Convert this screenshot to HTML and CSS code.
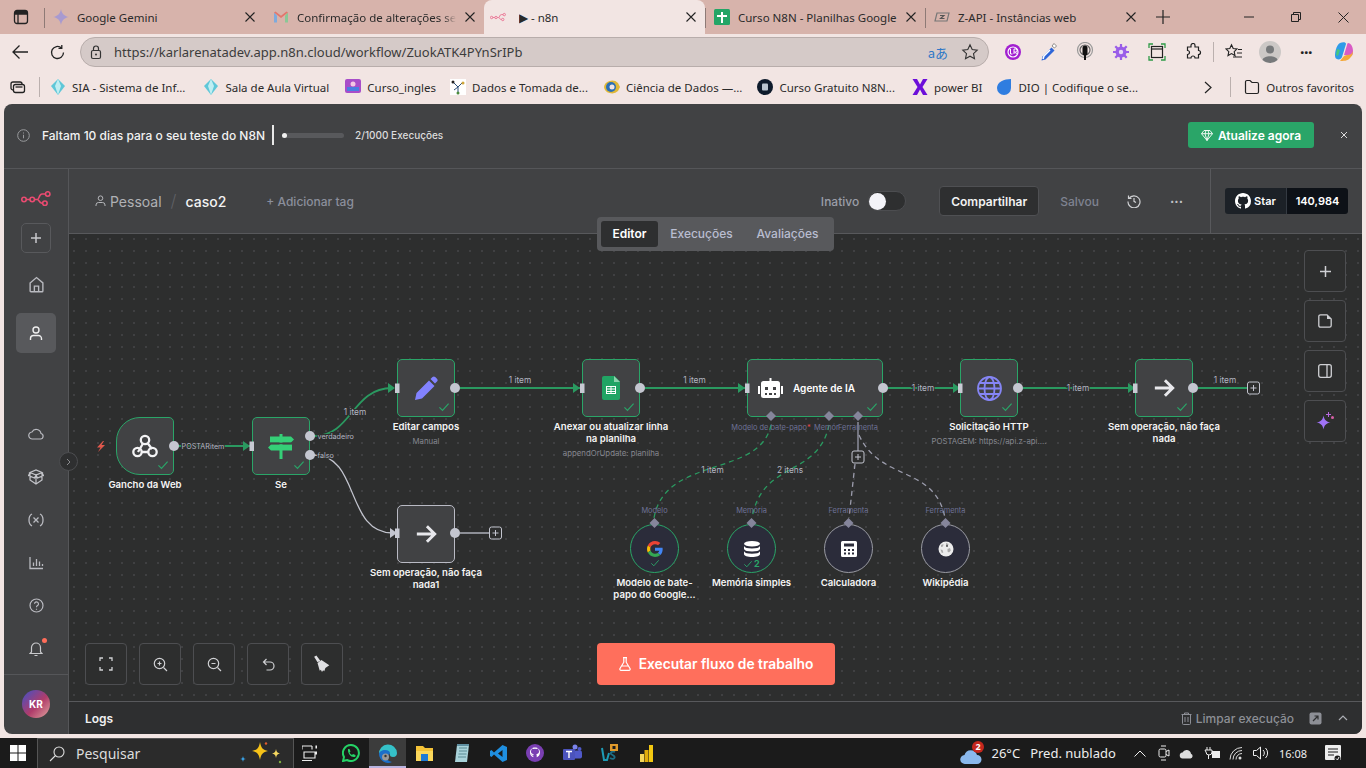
FILE: index.html
```html
<!DOCTYPE html>
<html lang="pt-BR">
<head>
<meta charset="utf-8">
<title>n8n</title>
<link rel="stylesheet" href="styles.css">
</head>
<body>
<svg class="sprite" aria-hidden="true">
  <symbol id="n8n" viewBox="0 0 32 16"><g fill="none" stroke="currentColor" stroke-width="1.7"><circle cx="3.2" cy="9" r="2.4"/><circle cx="12" cy="9" r="2.4"/><circle cx="28.5" cy="3.2" r="2.4"/><circle cx="25.5" cy="13" r="2.4"/><path d="M5.6 9h4M14.4 9h3c2.5 0 1.5-5.8 5-5.8h3.7M17.4 9c2.2 0 1.4 4 5 4h.7"/></g></symbol>
  <symbol id="check" viewBox="0 0 14 12"><path d="M1.5 6.5l3.7 3.7 7.3-8.2" fill="none" stroke="currentColor" stroke-width="1.4"/></symbol>
  <symbol id="x" viewBox="0 0 12 12"><path d="M1.5 1.5l9 9M10.500 1.5l-9 9" fill="none" stroke="currentColor" stroke-width="1.1"/></symbol>
  <symbol id="arrow" viewBox="0 0 24 24"><path d="M2 12h19M13 3.5l8.5 8.5-8.5 8.5" fill="none" stroke="currentColor" stroke-width="3.2"/></symbol>
  <symbol id="gemini" viewBox="0 0 16 16"><path d="M8 0c.6 4.5 3.4 7.3 8 8-4.6.7-7.4 3.5-8 8-.6-4.5-3.4-7.3-8-8 4.6-.7 7.4-3.5 8-8z"/></symbol>
</svg>

<header class="tabbar">
  <div class="tab-strip-btn">
    <svg width="16" height="16" viewBox="0 0 16 16"><rect x="1.5" y="1.5" width="13" height="13" rx="2.5" fill="none" stroke="#222" stroke-width="1.3"/><path d="M1.5 5h13M5 5v9" stroke="#222" stroke-width="1.3"/><rect x="2" y="2" width="12" height="3" fill="#222"/></svg>
  </div>
  <div class="tab tab-sep">
    <svg class="tab-ico gem-ico" width="16" height="16"><use href="#gemini"/></svg>
    <span class="tab-title">Google Gemini</span>
    <svg class="tab-x" width="12" height="12"><use href="#x"/></svg>
  </div>
  <div class="tab">
    <svg class="tab-ico" width="16" height="16" viewBox="0 0 16 16"><path d="M1 3.5v10h3v-7z" fill="#7eaadc"/><path d="M15 3.5v10h-3v-7z" fill="#8ac796"/><path d="M1 3.5l7 5.500 7-5.500-1.500-1-5.500 4.200-5.500-4.200z" fill="#e2766c"/></svg>
    <span class="tab-title tab-fade">Confirmação de alterações ser</span>
    <svg class="tab-x" width="12" height="12"><use href="#x"/></svg>
  </div>
  <div class="tab tab-active">
    <svg class="tab-ico pink" width="16" height="16"><use href="#n8n"/></svg>
    <span class="tab-title">▶ - n8n</span>
    <svg class="tab-x" width="12" height="12"><use href="#x"/></svg>
  </div>
  <div class="tab tab-sep">
    <svg class="tab-ico" width="16" height="16" viewBox="0 0 16 16"><rect width="16" height="16" rx="1.5" fill="#23a566"/><path d="M7 3h2v3h4v2H9v6H7V8H3V6h4z" fill="#fff"/></svg>
    <span class="tab-title">Curso N8N - Planilhas Google</span>
    <svg class="tab-x" width="12" height="12"><use href="#x"/></svg>
  </div>
  <div class="tab tab-sep">
    <svg class="tab-ico" width="16" height="16" viewBox="0 0 16 16"><path d="M3 4h12l-2 8H1z" fill="none" stroke="#777" stroke-width="1.2"/><path d="M6 6.500h4l-3.500 3h4" fill="none" stroke="#555" stroke-width="1.1"/></svg>
    <span class="tab-title">Z-API - Instâncias web</span>
    <svg class="tab-x" width="12" height="12"><use href="#x"/></svg>
  </div>
  <svg class="tab-plus" width="14" height="14" viewBox="0 0 14 14"><path d="M7 0v14M0 7h14" stroke="#222" stroke-width="1.2"/></svg>
  <div class="win-ctrls">
    <svg width="10" height="10" viewBox="0 0 10 10"><path d="M0 5h10" stroke="#222"/></svg>
    <svg width="10" height="10" viewBox="0 0 10 10"><path d="M.5 2.500h7v7h-7zM2.500 2.500v-2h7v7h-2" fill="none" stroke="#222"/></svg>
    <svg width="11" height="11" viewBox="0 0 11 11"><path d="M.5.500l10 10M10.500.500l-10 10" stroke="#222"/></svg>
  </div>
</header>

<nav class="toolbar">
  <svg class="tb-back" width="18" height="16" viewBox="0 0 18 16"><path d="M17 8H2M8.500 1.500L2 8l6.500 6.500" fill="none" stroke="#222" stroke-width="1.3"/></svg>
  <svg class="tb-reload" width="17" height="17" viewBox="0 0 17 17"><path d="M14.500 8.500a6 6 0 1 1-2-4.500M12.800 1v3.300H9.500" fill="none" stroke="#222" stroke-width="1.3"/></svg>
  <div class="urlbar">
    <svg width="12" height="15" viewBox="0 0 12 15"><rect x="1.5" y="5.5" width="9" height="8" rx="1.5" fill="none" stroke="#333" stroke-width="1.2"/><path d="M3.500 5.500V3.500a2.500 2.500 0 0 1 5 0v2" fill="none" stroke="#333" stroke-width="1.2"/><circle cx="6" cy="9.5" r="1" fill="#333"/></svg>
    <span class="url">https://karlarenatadev.app.n8n.cloud/workflow/ZuokATK4PYnSrIPb</span>
    <span class="url-spacer"></span>
    <span class="url-trans">aあ</span>
    <svg width="18" height="18" viewBox="0 0 18 18"><path d="M9 1.800l2.200 4.700 5 .6-3.700 3.500 1 5.100L9 13.200l-4.500 2.500 1-5.100-3.700-3.500 5-.6z" fill="none" stroke="#333" stroke-width="1.1"/></svg>
  </div>
  <div class="exts">
    <span class="ext"><svg width="18" height="18" viewBox="0 0 18 18"><circle cx="9" cy="9" r="8" fill="#a21fd0"/><circle cx="9" cy="9" r="5" fill="none" stroke="#fff" stroke-width="1.2"/><path d="M6.500 6v5h2M10 11V6h1.500a1.500 1.500 0 0 1 0 3H10M11.500 9l1 2" fill="none" stroke="#fff"/></svg></span>
    <span class="ext"><svg width="18" height="20" viewBox="0 0 18 20"><path d="M1.500 18.500l1-4 9-9 3 3-9 9z" fill="#2f66d8"/><path d="M3 17l1-3 6-6" stroke="#fff" stroke-width="1.5" fill="none"/><path d="M12 4l2-2.500 2.500 2.500-2 2z" fill="#fff" stroke="#444" stroke-width=".6"/></svg></span>
    <span class="ext"><svg width="18" height="20" viewBox="0 0 18 20"><circle cx="9" cy="8" r="7.5" fill="none" stroke="#999" stroke-width="1.2"/><circle cx="9" cy="8" r="5" fill="none" stroke="#666" stroke-width="1.2"/><rect x="6.5" y="3.5" width="5" height="10" rx="2.5" fill="#111"/><path d="M9 13v5" stroke="#111" stroke-width="2"/></svg></span>
    <span class="ext"><svg width="18" height="18" viewBox="0 0 18 18"><circle cx="9" cy="9" r="5.5" fill="#9a5de8"/><circle cx="9" cy="9" r="2.2" fill="#e8daf7"/><path d="M9 1v3M9 14v3M1 9h3M14 9h3M3.300 3.300l2.100 2.100M12.600 12.600l2.100 2.100M3.300 14.700l2.100-2.100M12.600 5.400l2.100-2.100" stroke="#9a5de8" stroke-width="2.2"/></svg></span>
    <span class="ext"><svg width="18" height="18" viewBox="0 0 18 18"><path d="M1 5V1h4M13 1h4v4M1 13v4h4M13 17h4v-4" fill="none" stroke="#2e9a47" stroke-width="1.3"/><rect x="3.5" y="3.5" width="11" height="11" fill="none" stroke="#222" stroke-width="1.2"/><path d="M3.500 6h11" stroke="#222" stroke-width="1.2"/></svg></span>
    <span class="ext"><svg width="18" height="18" viewBox="0 0 18 18"><path d="M7 2.500a2 2 0 0 1 4 0V4h3.500v3.500a2 2 0 0 1 0 4v3.500H11a2 2 0 0 0-4 0H3.500v-3.500a2 2 0 0 0 0-4V4H7z" fill="none" stroke="#222" stroke-width="1.2"/></svg></span>
    <i class="ext-sep"></i>
    <span class="ext"><svg width="18" height="18" viewBox="0 0 18 18"><path d="M6.500 1.800l1.700 3.700 3.800.5-2.800 2.700.8 3.900-3.500-2-3.500 2 .8-3.900L1 6l3.800-.5zM13 6.500h4M12 10h5M8 14h9" fill="none" stroke="#222" stroke-width="1.1"/></svg></span>
    <span class="ext"><span class="profile"><svg width="22" height="22" viewBox="0 0 22 22"><circle cx="11" cy="11" r="11" fill="#ccc8c6"/><circle cx="11" cy="8.5" r="4" fill="#77797b"/><path d="M3.500 19c1-5 14-5 15 0a11 11 0 0 1-15 0z" fill="#77797b"/></svg></span></span>
    <span class="ext ext-dots">···</span>
    <span class="ext ext-last"><svg width="22" height="22" viewBox="0 0 22 22"><path d="M7 2c3-1.500 6-1 6 1l-4 13c-1 3-5 3-6.500 1C1 14 3 4 7 2z" fill="#2f9be8"/><path d="M15 2c3 0 5 4 5 8s-1 5-3 5l-6-1 3-10c.2-.8.5-2 1-2z" fill="#d95bc5"/><path d="M7 20c3 0 8 0 10-3 2-2 3-4 3-7-1 3-3 4-6 4l-3 1z" fill="#f4a93b"/><path d="M4 8l3 1-2 6-2-1z" fill="#44c780"/></svg></span>
  </div>
</nav>

<div class="bookmarks">
  <svg class="bm-lead" width="16" height="16" viewBox="0 0 16 16"><rect x="1" y="3" width="11" height="8" rx="2" fill="none" stroke="#222" stroke-width="1.3"/><rect x="3.5" y="5.5" width="11" height="8" rx="2" fill="#f2e5e3" stroke="#222" stroke-width="1.3"/><path d="M5.500 8h7" stroke="#222" stroke-width="1.3"/></svg>
  <i class="bm-sep"></i>
  <span class="bm b1"><svg width="16" height="16" viewBox="0 0 16 16"><path d="M8 0l7 7-7 9-7-9z" fill="#5fc7d8"/><path d="M8 0l3 7-3 9-3-9z" fill="#bfeef2"/></svg>SIA - Sistema de Inf...</span>
  <span class="bm b2"><svg width="16" height="16" viewBox="0 0 16 16"><path d="M8 0l7 7-7 9-7-9z" fill="#5fc7d8"/><path d="M8 0l3 7-3 9-3-9z" fill="#bfeef2"/></svg>Sala de Aula Virtual</span>
  <span class="bm b3"><svg width="16" height="16" viewBox="0 0 16 16"><rect width="16" height="14" rx="2" fill="#a84dc9"/><rect x="2" y="8" width="12" height="4" fill="#4a7de0"/><circle cx="8" cy="5" r="2.5" fill="#f4c6e4"/></svg>Curso_ingles</span>
  <span class="bm b4"><svg width="16" height="16" viewBox="0 0 16 16"><rect width="16" height="16" fill="#fff"/><path d="M3 3l5 5 5-5M8 8v6M4 11l4-3" stroke="#2b4f7a" fill="none"/><circle cx="3" cy="3" r="1.5" fill="#222"/><circle cx="13" cy="4" r="1.5" fill="#d0a63a"/><circle cx="8" cy="14" r="1.5" fill="#4c8b3c"/></svg>Dados e Tomada de...</span>
  <span class="bm b5"><svg width="16" height="16" viewBox="0 0 16 16"><path d="M0 8a8 7 0 0 1 14-4l2 4-2 4a8 7 0 0 1-14-4z" fill="#e0b838"/><circle cx="7" cy="8" r="5" fill="#2b6fb5"/><circle cx="8" cy="8" r="2.5" fill="#f2e5e3"/></svg>Ciência de Dados —...</span>
  <span class="bm b6"><svg width="16" height="16" viewBox="0 0 16 16"><circle cx="8" cy="8" r="8" fill="#0d1a2b"/><rect x="5" y="4.5" width="6" height="7" rx="1" fill="#b8c3cf"/></svg>Curso Gratuito N8N...</span>
  <span class="bm b7"><svg width="16" height="16" viewBox="0 0 16 16"><path d="M.5 0h4.500L8 5.500 11 0h4.500l-5 8 5 8H11L8 10.500 5 16H.5l5-8z" fill="#6c0fd9"/></svg>power BI</span>
  <span class="bm b8"><svg width="16" height="16" viewBox="0 0 16 16"><path d="M15 0v9a7 7 0 0 1-14 0C1 3 8 0 15 0z" fill="#2f7de0"/></svg>DIO | Codifique o se...</span>
  <span class="bm-spacer"></span>
  <svg class="bm-more" width="8" height="13" viewBox="0 0 8 13"><path d="M1 1l6 5.500L1 12" fill="none" stroke="#222" stroke-width="1.2"/></svg>
  <i class="bm-sep bm-sep2"></i>
  <span class="bm bm-other"><svg width="16" height="16" viewBox="0 0 16 16"><path d="M1.500 4.500V3a1.500 1.500 0 0 1 1.500-1.500h3L8 3.500h5A1.500 1.500 0 0 1 14.500 5v8a1.500 1.500 0 0 1-1.500 1.500H3A1.500 1.500 0 0 1 1.500 13z" fill="none" stroke="#222" stroke-width="1.2"/></svg>Outros favoritos</span>
</div>

<div class="app">
  <div class="banner">
    <svg class="banner-info" width="13" height="13" viewBox="0 0 13 13"><circle cx="6.5" cy="6.5" r="5.8" fill="none" stroke="#9a9b9e"/><path d="M6.500 5.800v3.500M6.500 3.500v1" stroke="#9a9b9e"/></svg>
    <span class="banner-text">Faltam 10 dias para o seu teste do N8N</span>
    <i class="banner-div"></i>
    <span class="progress"><i class="progress-dot"></i></span>
    <span class="banner-count">2/1000 Execuções</span>
    <span class="grow"></span>
    <span class="upgrade"><svg width="12" height="11" viewBox="0 0 12 11"><path d="M3 .5h6l2.500 3.200L6 10.500.5 3.700zM.5 3.700h11M4 3.700l2 6.800 2-6.800M4 3.700L5 .5M8 3.700L7 .5" fill="none" stroke="#fff" stroke-width=".9"/></svg>Atualize agora</span>
    <svg class="banner-x" width="8" height="8" viewBox="0 0 12 12"><path d="M1.500 1.500l9 9M10.500 1.500l-9 9" fill="none" stroke="#e8e8e8" stroke-width="1.4"/></svg>
  </div>
  <div class="main">
    <aside class="sidebar">
      <svg class="side-logo" width="30" height="15"><use href="#n8n"/></svg>
      <span class="side-add"><svg width="12" height="12" viewBox="0 0 12 12"><path d="M6 1v10M1 6h10" stroke="#c8c9cc" stroke-width="1.5"/></svg></span>
      <span class="side-item side-home"><svg width="17" height="17" viewBox="0 0 16 16"><path d="M2 6.500L8 1.500l6 5V14a.8.800 0 0 1-.8.800H2.800A.8.800 0 0 1 2 14zM6 14.800V9.500h4v5.300" fill="none" stroke="#b9bac0" stroke-width="1.3"/></svg></span>
      <span class="side-active"><svg width="14" height="15" viewBox="0 0 14 15"><circle cx="7" cy="4" r="3" fill="none" stroke="#eee" stroke-width="1.4"/><path d="M1.500 14v-1.500A3 3 0 0 1 4.500 9.500h5a3 3 0 0 1 3 3V14" fill="none" stroke="#eee" stroke-width="1.4"/></svg></span>
      <div class="side-group">
        <span class="side-item"><svg width="16" height="13" viewBox="0 0 16 13"><path d="M4.500 12a3.500 3.500 0 0 1-.5-7 4.800 4.800 0 0 1 9 1.500 2.800 2.800 0 0 1-.5 5.500z" fill="none" stroke="#b9bac0" stroke-width="1.2"/></svg></span>
        <span class="side-item"><svg width="16" height="16" viewBox="0 0 16 16"><path d="M8 6L2 3.500 8 1l6 2.500zM8 6v9M2 3.500V11l6 4 6-4V3.500M2 3.500L.5 6.500 6.500 9 8 6l1.500 3 6-2.500L14 3.500" fill="none" stroke="#c4c5ca" stroke-width="1.2"/></svg></span>
        <span class="side-item side-vars"><svg width="16" height="14" viewBox="0 0 16 14"><path d="M4 1c-2 1-3 3.500-3 6s1 5 3 6M12 1c2 1 3 3.500 3 6s-1 5-3 6M5.500 4.500l5 5M10.500 4.500l-5 5" fill="none" stroke="#b9bac0" stroke-width="1.3"/></svg></span>
        <span class="side-item"><svg width="15" height="14" viewBox="0 0 15 14"><path d="M1 1v11.500h13M4.500 10V6.500M7.500 10V3M10.500 10V5.500M13.500 10V8" fill="none" stroke="#b9bac0" stroke-width="1.3"/></svg></span>
        <span class="side-item"><svg width="15" height="15" viewBox="0 0 15 15"><circle cx="7.5" cy="7.5" r="6.5" fill="none" stroke="#b9bac0" stroke-width="1.2"/><path d="M5.500 5.800a2 2 0 1 1 3 1.800c-.7.400-1 .8-1 1.600M7.500 10.700v1" fill="none" stroke="#b9bac0" stroke-width="1.2"/></svg></span>
        <span class="side-item side-bell"><svg width="14" height="16" viewBox="0 0 14 16"><path d="M2.500 11V6.500a4.500 4.500 0 0 1 9 0V11l1.500 1.500H1zM5.500 14.500h3" fill="none" stroke="#c8c9cc" stroke-width="1.2"/></svg><i class="bell-dot"></i></span>
      </div>
      <div class="side-foot"><span class="avatar">KR</span></div>
    </aside>
    <span class="collapse"><svg width="5" height="8" viewBox="0 0 5 8"><path d="M1 1l3 3-3 3" fill="none" stroke="#8a8b8e"/></svg></span>

    <section class="work">
      <div class="wf-head">
        <svg class="wf-user" width="11" height="12" viewBox="0 0 11 12"><circle cx="5.5" cy="3.2" r="2.3" fill="none" stroke="#b5b6ba"/><path d="M1 11v-1a2.500 2.500 0 0 1 2.500-2.500h4A2.500 2.500 0 0 1 10 10v1" fill="none" stroke="#b5b6ba"/></svg>
        <span class="wf-owner">Pessoal</span>
        <span class="wf-slash">/</span>
        <span class="wf-name">caso2</span>
        <span class="wf-tag">+ Adicionar tag</span>
        <span class="grow"></span>
        <span class="wf-state">Inativo</span>
        <span class="toggle"><i class="knob"></i></span>
        <span class="share">Compartilhar</span>
        <span class="saved">Salvou</span>
        <svg class="hist" width="14" height="14" viewBox="0 0 14 14"><path d="M2 4.500a6 6 0 1 1-1 3M1.500 1.500v3h3M7 4v3.300l2 1.200" fill="none" stroke="#d0d1d4" stroke-width="1.2"/></svg>
        <span class="dots">···</span>
        <i class="head-div"></i>
        <span class="gh"><span class="gh-star"><svg width="16" height="16" viewBox="0 0 16 16"><path fill="#fff" d="M8 0C3.580 0 0 3.580 0 8c0 3.540 2.290 6.530 5.470 7.590.4.070.55-.17.55-.38 0-.19-.01-.82-.01-1.490-2.010.37-2.530-.49-2.690-.94-.09-.23-.48-.94-.82-1.130-.28-.15-.68-.52-.01-.53.63-.01 1.080.58 1.230.82.720 1.210 1.870.87 2.330.66.070-.52.280-.87.510-1.070-1.780-.2-3.640-.89-3.640-3.950 0-.87.310-1.590.820-2.150-.08-.2-.36-1.020.080-2.120 0 0 .67-.21 2.200.82.640-.18 1.320-.27 2-.27s1.360.09 2 .27c1.530-1.040 2.200-.82 2.200-.82.440 1.100.160 1.920.080 2.120.51.560.82 1.270.82 2.150 0 3.070-1.870 3.750-3.650 3.950.29.250.54.730.54 1.480 0 1.070-.01 1.930-.01 2.200 0 .21.150.46.550.38A8.010 8.010 0 0 0 16 8c0-4.420-3.580-8-8-8z"/></svg>Star</span><span class="gh-count">140,984</span></span>
      </div>
      <div class="views"><span class="view view-on">Editor</span><span class="view">Execuções</span><span class="view">Avaliações</span></div>

      <div class="canvas">
        <svg class="edges" viewBox="69 234 1293 467">
          <g class="e-green">
            <path d="M178 446H250"/>
            <path d="M314 436C352 436 352 388 392 388"/>
            <path d="M460 388H580"/>
            <path d="M645 388H745"/>
            <path d="M887 388H958"/>
            <path d="M1023 388H1133"/>
            <path d="M1198 388H1247"/>
          </g>
          <path class="e-white" d="M314 455C360 455 345 533 393 533"/>
          <path class="e-white" d="M460 533H489"/>
          <path class="e-dash-green" d="M771 425C760 478 665 455 654 518"/>
          <path class="e-dash-green" d="M829 425C818 478 762 460 752 518"/>
          <path class="e-solid-gray" d="M858 422V451"/>
          <path class="e-dash-gray" d="M855 464L849 518"/>
          <path class="e-dash-gray" d="M859 435C880 482 935 465 945 518"/>
          <g class="e-arrows">
            <path d="M243 441l7 5-7 5z"/>
            <path d="M388 383l7 5-7 5z"/>
            <path d="M573 383l7 5-7 5z"/>
            <path d="M738 383l7 5-7 5z"/>
            <path d="M953 383l7 5-7 5z"/>
            <path d="M1128 383l7 5-7 5z"/>
          </g>
          <path class="e-arrow-gray" d="M390 528l7 5-7 5z"/>
        </svg>

        <div class="wrap w-web"><div class="node node-web"><svg width="26" height="24" viewBox="0 0 26 24"><g fill="none" stroke="#f3f3f5" stroke-width="2.3"><circle cx="13" cy="6" r="4.2"/><circle cx="5.5" cy="18" r="4.2"/><circle cx="20.5" cy="18" r="4.2"/><path d="M11 9.500L6 18M15.500 9L20 15M9.500 18h7.500"/></g></svg><svg class="chk" width="12" height="10"><use href="#check"/></svg></div><div class="name">Gancho da Web</div></div>
        <div class="wrap w-if"><div class="node"><svg width="26" height="25" viewBox="0 0 26 25"><path fill="#35cf77" d="M2 2.500h21l3 3-3 3H2zM3 10.500h21v6H3l-3-3zM11.500 0h3v2.500h-3zM11.500 8.500h3v2h-3zM11.500 16.500h3V25h-3z"/><path d="M2 8.700h22v1.500H2z" fill="#414244"/></svg><svg class="chk" width="12" height="10"><use href="#check"/></svg></div><div class="name">Se</div></div>
        <div class="wrap w-edit"><div class="node"><svg width="24" height="24" viewBox="0 0 24 24"><path fill="#8282ff" d="M1 24l1.500-7L15 4.500l5.500 5.500L8 22.500zM16.500 3l2-2a2 2 0 0 1 2.700 0l1.800 1.800a2 2 0 0 1 0 2.700l-2 2z"/></svg><svg class="chk" width="12" height="10"><use href="#check"/></svg></div><div class="name">Editar campos</div><div class="sub">Manual</div></div>
        <div class="wrap w-noop1"><div class="node node-gray"><svg class="ico-arrow" width="22" height="22"><use href="#arrow"/></svg></div><div class="name">Sem operação, não faça<br>nada1</div></div>
        <div class="wrap w-sheet"><div class="node"><svg width="18" height="24" viewBox="0 0 18 24"><path fill="#21a464" d="M2 0h10.500L18 5.500V22a2 2 0 0 1-2 2H2a2 2 0 0 1-2-2V2a2 2 0 0 1 2-2z"/><path fill="#8ed1ad" d="M12 0l6 6h-6z"/><path fill="#fff" d="M4 10h10v8H4zm1 1v1.500h3.500V11zm4.500 0v1.500H13V11zM5 13.500V15h3.500v-1.500zm4.500 0V15H13v-1.500zM5 16v1h3.500v-1zm4.500 0v1H13v-1z"/></svg><svg class="chk" width="12" height="10"><use href="#check"/></svg></div><div class="name">Anexar ou atualizar linha<br>na planilha</div><div class="sub">appendOrUpdate: planilha</div></div>
        <div class="wrap w-agent"><div class="node node-agent"><svg width="25" height="20" viewBox="0 0 25 20"><path fill="#fff" d="M11.500 0h2v3h-2zM5.500 3h14A2.500 2.500 0 0 1 22 5.500v12a2.500 2.500 0 0 1-2.500 2.500h-14A2.500 2.500 0 0 1 3 17.500v-12A2.500 2.500 0 0 1 5.500 3zM0 8h2v8H0zM23 8h2v8h-2z"/><path fill="#414244" d="M7 9h3v3H7zM15 9h3v3h-3zM7 15h2v2H7zM11 15h3v2h-3zM16 15h2v2h-2z"/></svg><span class="agent-title">Agente de IA</span><svg class="chk" width="12" height="10"><use href="#check"/></svg></div></div>
        <div class="wrap w-http"><div class="node"><svg width="25" height="25" viewBox="0 0 25 25"><g fill="none" stroke="#8585f5" stroke-width="1.8"><circle cx="12.5" cy="12.5" r="11.5"/><ellipse cx="12.5" cy="12.5" rx="5" ry="11.5"/><path d="M1 12.500h23M2.500 7h20M2.500 18h20"/></g></svg><svg class="chk" width="12" height="10"><use href="#check"/></svg></div><div class="name">Solicitação HTTP</div><div class="sub">POSTAGEM: https://api.z-api....</div></div>
        <div class="wrap w-noop"><div class="node"><svg class="ico-arrow" width="22" height="22"><use href="#arrow"/></svg><svg class="chk" width="12" height="10"><use href="#check"/></svg></div><div class="name">Sem operação, não faça<br>nada</div></div>

        <div class="wrap w-s1"><div class="sn sn-ok"><svg width="16" height="16" viewBox="0 0 48 48"><path fill="#EA4335" d="M24 9.500c3.540 0 6.710 1.220 9.210 3.600l6.850-6.850C35.900 2.380 30.470 0 24 0 14.620 0 6.510 5.380 2.560 13.220l7.980 6.190C12.430 13.720 17.740 9.500 24 9.500z"/><path fill="#4285F4" d="M46.980 24.550c0-1.570-.15-3.090-.38-4.550H24v9.020h12.940c-.58 2.960-2.260 5.480-4.780 7.180l7.730 6c4.510-4.180 7.090-10.360 7.090-17.650z"/><path fill="#FBBC05" d="M10.530 28.590c-.48-1.450-.76-2.990-.76-4.590s.27-3.140.76-4.590l-7.980-6.190C.92 16.460 0 20.120 0 24c0 3.880.92 7.540 2.560 10.780l7.970-6.190z"/><path fill="#34A853" d="M24 48c6.480 0 11.930-2.130 15.890-5.810l-7.730-6c-2.150 1.450-4.920 2.300-8.160 2.300-6.260 0-11.570-4.220-13.470-9.910l-7.980 6.190C6.510 42.620 14.620 48 24 48z"/></svg><svg class="snchk" width="10" height="8"><use href="#check"/></svg></div><div class="name">Modelo de bate-<br>papo do Google...</div></div>
        <div class="wrap w-s2"><div class="sn sn-ok"><svg width="16" height="16" viewBox="0 0 16 16"><g fill="#fff"><ellipse cx="8" cy="2.8" rx="8" ry="2.8"/><path d="M0 5c1 1.800 3.500 2.500 8 2.500S15 6.800 16 5v3c-1 1.800-3.500 2.500-8 2.500S1 9.800 0 8zM0 10.300c1 1.800 3.500 2.500 8 2.500s7-.7 8-2.500V13c0 1.800-3.500 3-8 3s-8-1.200-8-3z"/></g></svg><span class="snchk2"><svg width="10" height="8"><use href="#check"/></svg>2</span></div><div class="name">Memória simples</div></div>
        <div class="wrap w-s3"><div class="sn"><svg width="16" height="16" viewBox="0 0 16 16"><path fill="#fff" fill-rule="evenodd" d="M1.500 0h13A1.500 1.500 0 0 1 16 1.500v13a1.500 1.500 0 0 1-1.500 1.500h-13A1.500 1.500 0 0 1 0 14.500v-13A1.500 1.500 0 0 1 1.500 0zM3 2.500v3h10v-3zM3 8v2h2V8zm4 0v2h2V8zm4 0v2h2V8zm-8 3.500v2h2v-2zm4 0v2h2v-2zm4 0v2h2v-2z"/></svg></div><div class="name">Calculadora</div></div>
        <div class="wrap w-s4"><div class="sn"><svg width="16" height="16" viewBox="0 0 16 16"><circle cx="8" cy="8" r="7.5" fill="#ececec"/><path d="M3 4l2.500-1-.5 2.500-2 .5zM8 2l2.500 1-1 2.500-1.500-1zM2.500 8.500l2 .5.800 2.500-1.500.5zM9.500 8l2.500-1 .8 2.500-1.800 2-1.500-1z" fill="#a9a9a9"/><circle cx="9" cy="5" r=".9" fill="#444"/></svg></div><div class="name">Wikipédia</div></div>

        <svg class="ports" viewBox="69 234 1293 467">
          <g class="p-out">
            <circle cx="174" cy="446" r="5"/><circle cx="310" cy="436" r="5"/><circle cx="310" cy="455" r="5"/>
            <circle cx="455" cy="388" r="5"/><circle cx="455" cy="533" r="5"/><circle cx="640" cy="388" r="5"/>
            <circle cx="883" cy="388" r="5"/><circle cx="1018" cy="388" r="5"/><circle cx="1193" cy="388" r="5"/>
          </g>
          <g class="p-in">
            <rect x="249.5" y="441.5" width="4.5" height="9.5"/><rect x="395" y="383.5" width="4.5" height="9.5"/><rect x="395" y="528.5" width="4.5" height="9.5"/>
            <rect x="580" y="383.5" width="4.5" height="9.5"/><rect x="745" y="383.5" width="4.5" height="9.5"/><rect x="958" y="383.5" width="4.5" height="9.5"/><rect x="1133" y="383.5" width="4.5" height="9.5"/>
          </g>
          <g class="p-dia">
            <path d="M771 411l5 5-5 5-5-5z"/><path d="M829 411l5 5-5 5-5-5z"/><path d="M858 411l5 5-5 5-5-5z"/>
            <path d="M654.500 518l5 5-5 5-5-5z"/><path d="M751.500 518l5 5-5 5-5-5z"/><path d="M848.500 518l5 5-5 5-5-5z"/><path d="M945.500 518l5 5-5 5-5-5z"/>
          </g>
          <g class="plus">
            <rect x="1247.5" y="382" width="12" height="12" rx="2"/><path d="M1253.500 385v6M1250.500 388h6"/>
            <rect x="489.5" y="527" width="12" height="12" rx="2"/><path d="M495.500 530v6M492.500 533h6"/>
            <rect x="852" y="451" width="12" height="12" rx="2"/><path d="M858 454v6M855 457h6"/>
          </g>
          <g class="lbl">
            <text class="on-edge small" x="203" y="449">POSTARitem</text>
            <text class="start on-edge small" x="317.5" y="439">verdadeiro</text>
            <text class="start on-edge small" x="317.5" y="458">falso</text>
            <text class="on-edge" x="355" y="415">1 item</text>
            <text x="520" y="383">1 item</text>
            <text x="694.5" y="383">1 item</text>
            <text class="on-edge" x="923" y="391">1 item</text>
            <text class="on-edge" x="1078" y="391">1 item</text>
            <text x="1225" y="383">1 item</text>
            <text x="712.5" y="473">1 item</text>
            <text x="790" y="473">2 itens</text>
          </g>
          <g class="lbl2">
            <text x="771" y="430">Modelo de bate-papo<tspan class="req">*</tspan></text>
            <text class="start" x="814" y="430">Memór</text>
            <text class="start" x="838" y="430">Ferramenta</text>
            <text x="654.5" y="513">Modelo</text>
            <text x="751.5" y="513">Memória</text>
            <text x="848.5" y="513">Ferramenta</text>
            <text x="945.5" y="513">Ferramenta</text>
          </g>
          <path class="bolt" d="M103 441l-6 6.500h3.500l-2.500 4.500 7-7h-3.500l2.500-4z"/>
        </svg>

        <div class="ctrl-left">
          <span class="cbtn"><svg width="14" height="14" viewBox="0 0 14 14"><path d="M1 4V1h3M10 1h3v3M1 10v3h3M10 13h3v-3" fill="none" stroke="#d0d1d4" stroke-width="1.3"/></svg></span>
          <span class="cbtn"><svg width="15" height="15" viewBox="0 0 15 15"><circle cx="6.5" cy="6.5" r="5.2" fill="none" stroke="#d0d1d4" stroke-width="1.2"/><path d="M10.500 10.500l3.500 3.500M4.500 6.500h4M6.500 4.500v4" stroke="#d0d1d4" stroke-width="1.2"/></svg></span>
          <span class="cbtn"><svg width="15" height="15" viewBox="0 0 15 15"><circle cx="6.5" cy="6.5" r="5.2" fill="none" stroke="#d0d1d4" stroke-width="1.2"/><path d="M10.500 10.500l3.500 3.500M4.500 6.500h4" stroke="#d0d1d4" stroke-width="1.2"/></svg></span>
          <span class="cbtn"><svg width="13" height="13" viewBox="0 0 13 13"><path d="M4.500 1L1.500 4l3 3M1.500 4h6.500a4 4 0 0 1 0 8H4.500" fill="none" stroke="#d0d1d4" stroke-width="1.2"/></svg></span>
          <span class="cbtn"><svg width="18" height="18" viewBox="0 0 16 16"><path d="M1 1.500l2-1 3.500 4.500L4 6.500zM4 7l3.500-2.500 7 4.500-3.500 2.500-1 3-1-1-1 1.500-1-2-1 1z" fill="#e0e0e3"/></svg></span>
        </div>
        <div class="ctrl-right">
          <span class="cbtn"><svg width="11" height="11" viewBox="0 0 11 11"><path d="M5.500 0v11M0 5.500h11" stroke="#cfd0d4" stroke-width="1.5"/></svg></span>
          <span class="cbtn"><svg width="14" height="14" viewBox="0 0 14 14"><path d="M2.500.8h6.500l4.200 4.200v6.500a1.700 1.700 0 0 1-1.700 1.700h-9A1.700 1.700 0 0 1 .8 11.500v-9A1.700 1.700 0 0 1 2.500.8z" fill="none" stroke="#cfd0d4" stroke-width="1.3"/><path d="M9 .8l4.200 4.200H9z" fill="#cfd0d4"/></svg></span>
          <span class="cbtn"><svg width="14" height="14" viewBox="0 0 14 14"><rect x=".7" y=".7" width="12.6" height="12.6" rx="2" fill="none" stroke="#cfd0d4" stroke-width="1.3"/><path d="M9 .7v12.600" stroke="#cfd0d4" stroke-width="1.3"/></svg></span>
          <span class="cbtn"><svg width="19" height="19" viewBox="0 0 19 19"><path d="M7.500 2.500c.7 4.300 2.700 6.300 7 7-4.300.7-6.300 2.700-7 7-.7-4.300-2.700-6.300-7-7 4.300-.7 6.300-2.700 7-7z" fill="#a073f7" transform="translate(0 1)"/><path d="M12.500 0v5M10 2.500h5" stroke="#b769e0" stroke-width="1"/><circle cx="16.5" cy="5.5" r="1.5" fill="#d65fa5"/></svg></span>
        </div>
        <span class="run"><svg width="12" height="14" viewBox="0 0 12 14"><path d="M4 .7h4M4.800.7v4.500L1 11.500a1.200 1.200 0 0 0 1 1.800h8a1.200 1.200 0 0 0 1-1.800L7.200 5.200V.7M2.800 9h6.400" fill="none" stroke="#fff" stroke-width="1.2"/></svg>Executar fluxo de trabalho</span>
      </div>

      <div class="logs">
        <span class="logs-title">Logs</span>
        <span class="grow"></span>
        <span class="logs-clear"><svg width="11" height="13" viewBox="0 0 11 13"><path d="M.5 2.500h10M3.500 2.500V1h4v1.500M1.500 2.500v9a1 1 0 0 0 1 1h6a1 1 0 0 0 1-1v-9M4 5v5M7 5v5" fill="none" stroke="#8d8f96"/></svg>Limpar execução</span>
        <svg class="logs-pop" width="13" height="13" viewBox="0 0 13 13"><rect x=".5" y=".5" width="12" height="12" rx="2" fill="#8d8f96"/><path d="M4 9l5-5M5.500 4H9v3.500" fill="none" stroke="#2e2f30" stroke-width="1.2"/></svg>
        <svg class="logs-chev" width="10" height="6" viewBox="0 0 10 6"><path d="M1 5l4-4 4 4" fill="none" stroke="#aaacb2" stroke-width="1.2"/></svg>
      </div>
    </section>
  </div>
</div>

<footer class="taskbar">
  <svg class="tk-win" width="16" height="16" viewBox="0 0 16 16"><path fill="#fff" d="M0 0h7.500v7.500H0zM8.500 0H16v7.500H8.500zM0 8.500h7.500V16H0zM8.500 8.500H16V16H8.500z"/></svg>
  <div class="tk-search">
    <svg width="16" height="16" viewBox="0 0 16 16"><circle cx="10" cy="6" r="5" fill="none" stroke="#ddd" stroke-width="1.1"/><path d="M6.500 9.500L1 15" stroke="#ddd" stroke-width="1.1"/></svg>
    <span class="tk-search-text">Pesquisar</span>
    <span class="grow"></span>
    <svg width="46" height="26" viewBox="0 0 46 26"><path d="M22 1c1 6 3 8 8 9-5 1-7 3-8 9-1-6-3-8-8-9 5-1 7-3 8-9z" fill="#f6c218"/><path d="M38 8c.5 3 1.500 4 4 4.500-2.500.5-3.500 1.500-4 4.500-.5-3-1.500-4-4-4.500 2.500-.5 3.500-1.500 4-4.500z" fill="#f6d860"/><path d="M5 15c.3 2 1 2.700 3 3-2 .3-2.700 1-3 3-.3-2-1-2.700-3-3 2-.3 2.700-1 3-3z" fill="#3aa3e8"/><circle cx="28" cy="2.5" r="1.2" fill="#e25c2e"/><circle cx="42" cy="21" r="1.2" fill="#7fae3f"/></svg>
  </div>
  <div class="tk-apps">
    <span class="tk-app"><svg width="15" height="17" viewBox="0 0 15 17"><path d="M0 1h10M0 4.500V1M10 1v3.500M2 7h11v6H2zM0 15.500h10M14 1h1v2h-1zM14 7h1v2h-1z" fill="none" stroke="#eee" stroke-width="1.1"/></svg></span>
    <span class="tk-app"><svg width="18" height="18" viewBox="0 0 18 18"><path d="M9 1a8 8 0 0 0-7 12L1 17l4-1A8 8 0 1 0 9 1z" fill="none" stroke="#25d366" stroke-width="2"/><path d="M6 5l1.500 0 1 2.500-1 1c.5 1 1.500 2 2.500 2.500l1-1 2.500 1v1.500c-3 2-8-2-7.500-7.500z" fill="#25d366"/></svg></span>
    <span class="tk-app tk-on"><svg width="20" height="20" viewBox="0 0 20 20"><path d="M1 11a9 9 0 0 1 18-1c0 2-1 4-4 4-2 0-3-1-3-2 0-3-3-4-6-3-3 .5-5 1.500-5 2z" fill="#35c1c8"/><path d="M1 11c0-2 3-4 6-4 3.500 0 5 1.500 5 3 0 .8-2 3-4 3a7 7 0 0 0 6 6 9 9 0 0 1-13-8z" fill="#1b6fc9"/><circle cx="7.5" cy="14" r="3.5" fill="#999"/><circle cx="7.5" cy="13" r="1.2" fill="#333"/></svg></span>
    <span class="tk-app"><svg width="17" height="16" viewBox="0 0 17 16"><path d="M0 1h7l2 2h8v13H0z" fill="#f4c237"/><path d="M0 6h17v10H0z" fill="#fbd75b"/><path d="M5 9h7v7H5z" fill="#1e7ad6"/></svg></span>
    <span class="tk-app"><svg width="16" height="18" viewBox="0 0 16 18"><path d="M3 1h12l-2 17H1z" fill="#a9d3da"/><path d="M5 4h8M5 7h8M4.500 10h8M4 13h8" stroke="#5a8b94"/><path d="M3 0h12v2H3z" fill="#5f8fa0"/></svg></span>
    <span class="tk-app"><svg width="17" height="17" viewBox="0 0 17 17"><path d="M12.500 0L17 2v13l-4.500 2L4 9.500 1.500 12 0 11V6l1.500-1L4 7.500zM12.500 5L8 8.500l4.500 3.500z" fill="#1f8fe0"/></svg></span>
    <span class="tk-app"><svg width="18" height="18" viewBox="0 0 18 18"><circle cx="9" cy="9" r="9" fill="#7a3fb2"/><path fill="#fff" d="M9 3.500C6 3.500 4 5.500 4 8.500c0 2.200 1.300 4 3.300 4.700v-1.500c-1.500 0-1.800-1.200-2.300-1.500 1 0 1.500 1 2.300 1 0-.5.200-.8.400-1-2-.3-2.700-1.300-2.700-2.700 0-.7.200-1.200.6-1.700-.1-.5 0-1.200.2-1.500.6 0 1.100.3 1.600.6a6 6 0 0 1 3.200 0c.5-.3 1-.6 1.600-.6.200.3.300 1 .2 1.500.4.500.6 1 .6 1.700 0 1.400-.7 2.400-2.700 2.700.3.300.4.800.4 1.300v1.700c2-.7 3.300-2.500 3.300-4.700 0-3-2-5-5-5z"/></svg></span>
    <span class="tk-app"><svg width="19" height="18" viewBox="0 0 19 18"><circle cx="12" cy="3" r="2.5" fill="#7b83eb"/><circle cx="16.5" cy="5" r="2" fill="#5059c9"/><rect x="9" y="6.5" width="10" height="8" rx="2" fill="#5059c9"/><rect x="0" y="5" width="12" height="11" rx="1" fill="#4b53bc"/><path d="M3 7.500h6M6 7.500V14" stroke="#fff" stroke-width="1.4"/></svg></span>
    <span class="tk-app"><svg width="17" height="18" viewBox="0 0 17 18"><path d="M1 4l2 12h3l2-7" fill="none" stroke="#1d9bb5" stroke-width="2"/><path d="M9 14c3 2 6 0 4-2l-3-2c-1-2 2-3 4-2" fill="none" stroke="#1d6d85" stroke-width="1.8"/><rect x="9" y="0" width="8" height="7" fill="#e09a2b"/><rect x="11.5" y="2" width="3" height="3" fill="#1b1b1b"/></svg></span>
    <span class="tk-app"><svg width="13" height="17" viewBox="0 0 13 17"><rect x="9" y="0" width="4" height="17" fill="#f2c811"/><rect x="4.5" y="5" width="4" height="12" fill="#e0ac0c"/><rect x="0" y="9" width="4" height="8" fill="#f5d75a"/></svg></span>
  </div>
  <span class="grow"></span>
  <div class="tk-tray">
    <span class="tk-weather"><svg width="26" height="26" viewBox="0 0 26 26"><path d="M5 24a4.500 4.500 0 0 1-.5-9 6.500 6.500 0 0 1 12.500 0 4.500 4.500 0 0 1 0 9z" fill="#8ab8ec"/><circle cx="18" cy="7" r="6" fill="#c4271d"/><text x="18" y="10" class="tk-badge">2</text></svg></span>
    <span class="tk-temp">26°C</span>
    <span class="tk-cond">Pred. nublado</span>
    <svg class="tk-t1" width="12" height="7" viewBox="0 0 12 7"><path d="M.5 6.500L6 1l5.500 5.500" fill="none" stroke="#eee"/></svg>
    <svg width="12" height="16" viewBox="0 0 12 16"><rect x="1" y="4" width="7" height="8" rx="1.5" fill="none" stroke="#eee"/><path d="M8 6.500l3-1.500v6l-3-1.500M3 1h5M3 15h5" fill="none" stroke="#eee"/></svg>
    <svg width="16" height="11" viewBox="0 0 16 11"><path d="M4 10.500a3 3 0 0 1-.5-6 4.500 4.500 0 0 1 8.500 1.200 2.500 2.500 0 0 1-.5 4.800z" fill="#ddd"/></svg>
    <svg width="16" height="13" viewBox="0 0 16 13"><path d="M3 0v3M6 0v3M1 3h7v2a3 3 0 0 1-6 0zM4.500 8v4" fill="none" stroke="#eee"/><rect x="8" y="4" width="8" height="7" fill="#eee"/></svg>
    <svg width="15" height="14" viewBox="0 0 15 14"><g fill="none" stroke="#ddd"><path d="M1 13.500a12 12 0 0 1 12-12M4 13.500a9 9 0 0 1 9-9M7 13.500a6 6 0 0 1 6-6"/></g><circle cx="11" cy="12" r="1.5" fill="#ddd"/></svg>
    <svg width="16" height="14" viewBox="0 0 16 14"><path d="M.5 4.500h3L7.500 1v12L3.500 9.500h-3zM10 4a4 4 0 0 1 0 6M12.500 2a7 7 0 0 1 0 10" fill="none" stroke="#eee"/></svg>
    <span class="tk-time">16:08</span>
    <svg class="tk-note" width="16" height="17" viewBox="0 0 16 17"><rect x="0" y="0" width="16" height="15" rx="1" fill="#eee"/><path d="M3 4h10M3 7h10M3 10h6" stroke="#1a1a1a"/><circle cx="12.5" cy="13.5" r="3" fill="#1a1a1a"/><path d="M11 13.500l1.500 1.500 1.500-3" stroke="#eee" fill="none"/></svg>
  </div>
</footer>
</body>
</html>
```
FILE: styles.css
```css
* { box-sizing: border-box; margin: 0; padding: 0; }
html, body { width: 1366px; height: 768px; overflow: hidden; }
body { background: #f2e5e3; font-family: "Noto Sans", sans-serif; color: #222; display: flex; flex-direction: column; }
svg { display: block; flex: none; }
i { display: block; }
.sprite { display: none; }
.grow { flex: 1; }

/* browser chrome */
.tabbar { height: 34px; background: #d7b3ab; display: flex; align-items: center; flex: none; }
.tab-strip-btn { width: 44px; display: flex; justify-content: center; padding-right: 3px; }
.tab { width: 220px; height: 34px; padding: 0 8px 0 9px; display: flex; align-items: center; gap: 8px; position: relative; font-size: 11.5px; }
.tab-sep::before { content: ""; position: absolute; left: 0; top: 8px; height: 20px; width: 1px; background: #8e7a76; }
.tab-active { background: #f2e5e3; border-radius: 8px 8px 0 0; width: 221px; padding-left: 6px; }
.tab-ico { color: #888; }
.gem-ico { fill: #a89ad0; }
.pink { color: #ea6b8e; }
.tab-title { flex: 1; white-space: nowrap; overflow: hidden; color: #2a2a2a; }
.tab-active .tab-title { margin-left: 5px; }
.tab-fade { -webkit-mask-image: linear-gradient(90deg, #000 92%, transparent); mask-image: linear-gradient(90deg, #000 92%, transparent); }
.tab-x { color: #222; }
.tab-plus { margin-left: 11px; }
.win-ctrls { margin-left: auto; display: flex; gap: 37px; align-items: center; padding-right: 17px; }

.toolbar { height: 36px; display: flex; align-items: center; flex: none; }
.tb-back { margin-left: 11px; }
.tb-reload { margin-left: 20px; }
.urlbar { margin-left: 14px; width: 909px; height: 30px; border-radius: 15px; background: #d5cac8; border: 1px solid #b8adab; display: flex; align-items: center; padding: 0 9px 0 9px; }
.url { margin-left: 12px; font-size: 13px; color: #3c3c3c; }
.url-spacer { flex: 1; }
.url-trans { font-size: 13px; color: #2f78c7; margin-right: 13px; font-family: "Noto Sans CJK JP", "Noto Sans", sans-serif; }
.exts { display: flex; align-items: center; margin-left: 6px; }
.ext { width: 36px; display: flex; justify-content: center; align-items: center; }
.ext-sep { width: 1px; height: 20px; background: #bbb0ae; margin: 0 2px; }
.ext-last { margin-left: 2px; }
.ext-dots { font-size: 16px; font-weight: 700; line-height: 1; letter-spacing: -.5px; }
.profile { display: block; width: 22px; height: 22px; }

.bookmarks { height: 34px; display: flex; align-items: center; flex: none; font-size: 11.5px; color: #2a2a2a; }
.bm-lead { margin-left: 10px; }
.bm-sep { width: 1px; height: 20px; background: #bbb0ae; margin-left: 13px; }
.bm { display: flex; align-items: center; gap: 6px; white-space: nowrap; }
.b1 { margin-left: 10px; }
.b2 { margin-left: 18px; }
.b3 { margin-left: 16px; }
.b4 { margin-left: 14px; }
.b5 { margin-left: 16px; }
.b6 { margin-left: 15px; }
.b7 { margin-left: 17px; }
.b8 { margin-left: 14px; }
.bm-spacer { flex: 1; }
.bm-more { margin-right: 18px; }
.bm-sep2 { margin: 0 13px 0 0; }
.bm-other { margin-right: 12px; }

/* app */
.app { margin: 0 4px; height: 630px; flex: none; background: #414244; border-radius: 8px; overflow: hidden; display: flex; flex-direction: column; font-family: Inter, sans-serif; color: #f0f0f0; }
.banner { height: 65px; border-bottom: 1px solid #555659; display: flex; align-items: center; padding: 0 14px 2px 13px; flex: none; }
.banner-text { font-size: 12px; font-weight: 500; margin-left: 12px; color: #f2f2f2; }
.banner-div { width: 2px; height: 20px; background: #e8e8e8; margin-left: 7px; }
.progress { width: 62px; height: 5px; border-radius: 3px; background: #58595c; margin-left: 8px; position: relative; display: block; }
.progress-dot { width: 5px; height: 5px; border-radius: 50%; background: #f0f0f0; }
.banner-count { font-size: 10px; font-weight: 500; color: #dcdcdc; margin-left: 11px; }
.upgrade { height: 26px; width: 126px; margin-right: 26px; background: #2aa568; border-radius: 3px; display: flex; align-items: center; justify-content: center; gap: 5px; font-size: 12px; font-weight: 600; color: #fff; }

.main { flex: 1; display: flex; min-height: 0; position: relative; }
.sidebar { width: 65px; border-right: 1px solid #555659; display: flex; flex-direction: column; align-items: center; flex: none; }
.side-logo { color: #ea4b71; margin-top: 22px; }
.side-add { width: 30px; height: 30px; border: 1px solid #58595c; border-radius: 5px; margin-top: 17px; display: flex; align-items: center; justify-content: center; }
.side-item { height: 43px; width: 40px; display: flex; align-items: center; justify-content: center; position: relative; flex: none; }
.side-home { margin-top: 10px; }
.side-active { width: 40px; height: 40px; background: #58595c; border-radius: 5px; margin-top: 7px; display: flex; align-items: center; justify-content: center; flex: none; }
.side-group { margin-top: auto; margin-bottom: 4px; }
.bell-dot { position: absolute; width: 5px; height: 5px; border-radius: 50%; background: #ff6d5a; left: 26px; top: 11px; }
.side-foot { border-top: 1px solid #555659; height: 60px; width: 100%; display: flex; align-items: center; justify-content: center; flex: none; padding-bottom: 2px; }
.avatar { width: 28px; height: 28px; border-radius: 50%; background: linear-gradient(135deg, #3f51c9, #b03c6a 55%, #e0a6a0); font-size: 10px; font-weight: 700; color: #fff; display: flex; align-items: center; justify-content: center; }
.collapse { position: absolute; left: 55px; top: 283px; width: 19px; height: 19px; border-radius: 50%; background: #2e2f30; border: 1px solid #4c4d50; display: flex; align-items: center; justify-content: center; z-index: 5; }

.work { flex: 1; min-width: 0; display: flex; flex-direction: column; position: relative; }
.wf-head { height: 65px; border-bottom: 1px solid #58595c; display: flex; align-items: center; flex: none; padding: 0 14px 0 26px; }
.wf-owner { font-size: 14px; color: #b0b1b5; margin-left: 4px; }
.wf-slash { font-size: 17px; font-weight: 300; color: #5f6064; margin-left: 9px; }
.wf-name { font-size: 14px; font-weight: 500; color: #f3f3f3; margin-left: 9px; }
.wf-tag { font-size: 12px; font-weight: 500; color: #8b8f9c; margin-left: 40px; }
.wf-state { font-size: 12px; font-weight: 500; color: #9b9ea8; }
.toggle { width: 38px; height: 20px; margin-left: 9px; background: #2e2f30; border: 1px solid #4c4d50; border-radius: 10px; display: block; }
.knob { width: 17px; height: 17px; border-radius: 50%; background: #f3f3f8; margin: 0.5px 0 0 0; }
.share { margin-left: 33px; width: 100px; height: 30px; background: #2e2f30; border: 1px solid #4f5053; border-radius: 4px; display: flex; align-items: center; justify-content: center; font-size: 12px; font-weight: 600; color: #f2f2f2; }
.saved { margin-left: 21px; font-size: 12px; font-weight: 500; color: #7f8391; }
.hist { margin-left: 28px; }
.dots { margin-left: 29px; font-size: 13px; font-weight: 700; color: #c0c1c5; width: 14px; }
.head-div { width: 1px; height: 64px; background: #58595c; margin: 0 14px 0 26px; }
.gh { display: flex; height: 26px; border-radius: 3px; overflow: hidden; font-size: 12px; font-weight: 600; color: #fff; }
.gh-star { width: 62px; background: #1c2127; display: flex; align-items: center; justify-content: center; gap: 3px; border-right: 1px solid #343a42; font-size: 11px; }
.gh-count { width: 61px; background: #0d1117; display: flex; align-items: center; justify-content: center; font-size: 11px; }

.views { position: absolute; left: 528px; top: 48px; width: 237px; height: 34px; background: #58595c; border-radius: 4px; padding: 4px; display: flex; z-index: 6; font-size: 12px; font-weight: 500; color: #b9bdd0; }
.view { display: flex; align-items: center; justify-content: center; width: 87px; padding-bottom: 1px; }
.view + .view + .view { width: 85px; }
.view-on { width: 57px; background: #2e2f30; border-radius: 3px; color: #fff; font-weight: 600; }

.canvas { flex: 1; min-height: 0; position: relative; overflow: hidden; background-color: #2d2e2e; background-image: radial-gradient(circle at 1px 1px, #4a4b4e .6px, transparent .9px); background-size: 12px 12px; background-position: 4px 4px; }
.edges, .ports { position: absolute; left: 0; top: 0; width: 1293px; height: 467px; }
.edges { z-index: 1; }
.ports { z-index: 3; pointer-events: none; }
.edges path { fill: none; }
.e-green path { stroke: #2a9960; stroke-width: 1.8; }
.e-white { stroke: #c3c5cf; stroke-width: 1.3; }
.e-dash-green { stroke: #2a9960; stroke-width: 1.3; stroke-dasharray: 5 4; }
.e-dash-gray { stroke: #9b9cac; stroke-width: 1.3; stroke-dasharray: 5 4; }
.e-solid-gray { stroke: #9b9cac; stroke-width: 1.3; }
.edges .e-arrows path { fill: #2a9960; }
.edges .e-arrow-gray { fill: #c3c5cf; }
.p-out { fill: #c4c6d0; }
.p-in { fill: #c8cad3; }
.p-dia { fill: #85859b; }
.plus rect { fill: #2d2e2e; stroke: #c3c5cf; stroke-width: 1; }
.plus path { stroke: #c3c5cf; stroke-width: 1; }
.lbl, .lbl2 { font-family: Inter, sans-serif; text-anchor: middle; }
.lbl { font-size: 8.3px; fill: #b4b6c2; }
.lbl .small { font-size: 7.2px; }
.lbl2 { font-size: 7.4px; fill: #6e7297; }
.lbl .start, .lbl2 .start { text-anchor: start; }
.on-edge { paint-order: stroke; stroke: #2d2e2e; stroke-width: 2px; }
.req { fill: #e8484a; }
.bolt { fill: #e0584c; }

.wrap { position: absolute; width: 160px; display: flex; flex-direction: column; align-items: center; z-index: 2; }
.w-web { left: -4px; top: 183px; }
.w-if { left: 132px; top: 183px; }
.w-edit { left: 277px; top: 125px; }
.w-noop1 { left: 277px; top: 271px; }
.w-sheet { left: 462px; top: 125px; }
.w-agent { left: 666px; top: 125px; }
.w-http { left: 840px; top: 125px; }
.w-noop { left: 1015px; top: 125px; }
.w-s1 { left: 505.5px; top: 290px; }
.w-s2 { left: 602.5px; top: 290px; }
.w-s3 { left: 699.5px; top: 290px; }
.w-s4 { left: 796.5px; top: 290px; }

.node { width: 58px; height: 58px; border: 1.5px solid #2aa568; border-radius: 5px; background: #414244; display: flex; align-items: center; justify-content: center; position: relative; }
.node-web { border-radius: 24px 5px 5px 24px; }
.node-gray { border-color: #b9bac4; }
.node-agent { width: 136px; justify-content: flex-start; padding-left: 10px; gap: 10px; }
.agent-title { font-size: 10px; font-weight: 600; color: #fff; }
.chk { position: absolute; right: 4px; bottom: 4px; color: #2aa568; }
.ico-arrow { color: #e8e8ec; }
.name { margin-top: 4px; font-size: 9.6px; line-height: 12px; font-weight: 600; color: #f5f5f5; text-align: center; white-space: nowrap; }
.sub { margin-top: 2px; font-size: 7.8px; line-height: 12px; color: #85878f; white-space: nowrap; }
.sn { width: 49px; height: 49px; border-radius: 50%; background: #2b2c3a; border: 1.5px solid #9a9ba3; display: flex; align-items: center; justify-content: center; position: relative; margin-bottom: 1px; }
.sn-ok { border-color: #2aa568; }
.snchk { position: absolute; left: 19px; bottom: 5px; color: #2aa568; }
.snchk2 { position: absolute; left: 15px; bottom: 3px; display: flex; align-items: center; gap: 1px; font-size: 9px; font-weight: 700; color: #2aa568; }
.sn + .name { margin-top: 3px; }

.ctrl-left { position: absolute; left: 16px; top: 409px; display: flex; gap: 12px; z-index: 4; }
.ctrl-right { position: absolute; left: 1235px; top: 16px; display: flex; flex-direction: column; gap: 8px; z-index: 4; }
.cbtn { width: 42px; height: 42px; border: 1px solid #4d4e51; border-radius: 4px; background: #2d2e2e; display: flex; align-items: center; justify-content: center; }
.run { position: absolute; left: 528px; top: 409px; width: 238px; height: 42px; background: #ff6f5c; border-radius: 4px; display: flex; align-items: center; justify-content: center; gap: 8px; font-size: 13.8px; font-weight: 600; color: #fff; z-index: 4; }

.logs { height: 33px; flex: none; background: #2e2f30; border-top: 1px solid #58595c; display: flex; align-items: center; padding: 0 14px 0 16px; }
.logs-title { font-size: 12px; font-weight: 600; color: #f0f0f0; }
.logs-clear { display: flex; align-items: center; gap: 4px; font-size: 12px; font-weight: 500; color: #8d8f96; }
.logs-pop { margin-left: 15px; }
.logs-chev { margin-left: 16px; }

/* taskbar */
.taskbar { margin-top: auto; height: 30px; flex: none; background: #1b1b1b; display: flex; align-items: center; color: #eee; font-size: 13px; }
.tk-win { margin-left: 10px; }
.tk-search { margin-left: 11px; width: 257px; height: 30px; background: #2b2b2b; border: 1px solid #555; border-bottom: 0; display: flex; align-items: center; padding-left: 11px; padding-right: 9px; }
.tk-search-text { font-size: 14px; color: #ddd; margin-left: 11px; }
.tk-apps { display: flex; margin-left: -3px; }
.tk-app { width: 36.9px; height: 30px; display: flex; align-items: center; justify-content: center; }
.tk-app:first-child { width: 36px; margin-right: 5.6px; }
.tk-on { background: #3c3c3c; box-shadow: inset 0 -2px 0 #b8b3e0; }
.tk-tray { display: flex; align-items: center; margin-right: 25px; }
.tk-weather { margin-right: 5px; }
.tk-badge { font-family: "Noto Sans", sans-serif; font-size: 9px; font-weight: 700; fill: #fff; text-anchor: middle; }
.tk-temp { font-size: 13px; }
.tk-cond { font-size: 13px; margin-left: 10px; }
.tk-t1 { margin: 0 3px 0 18px; }
.tk-tray > svg + svg { margin-left: 9px; }
.tk-time { font-size: 11px; margin-left: 10px; }
.tk-note { margin-left: 18px; }
```
